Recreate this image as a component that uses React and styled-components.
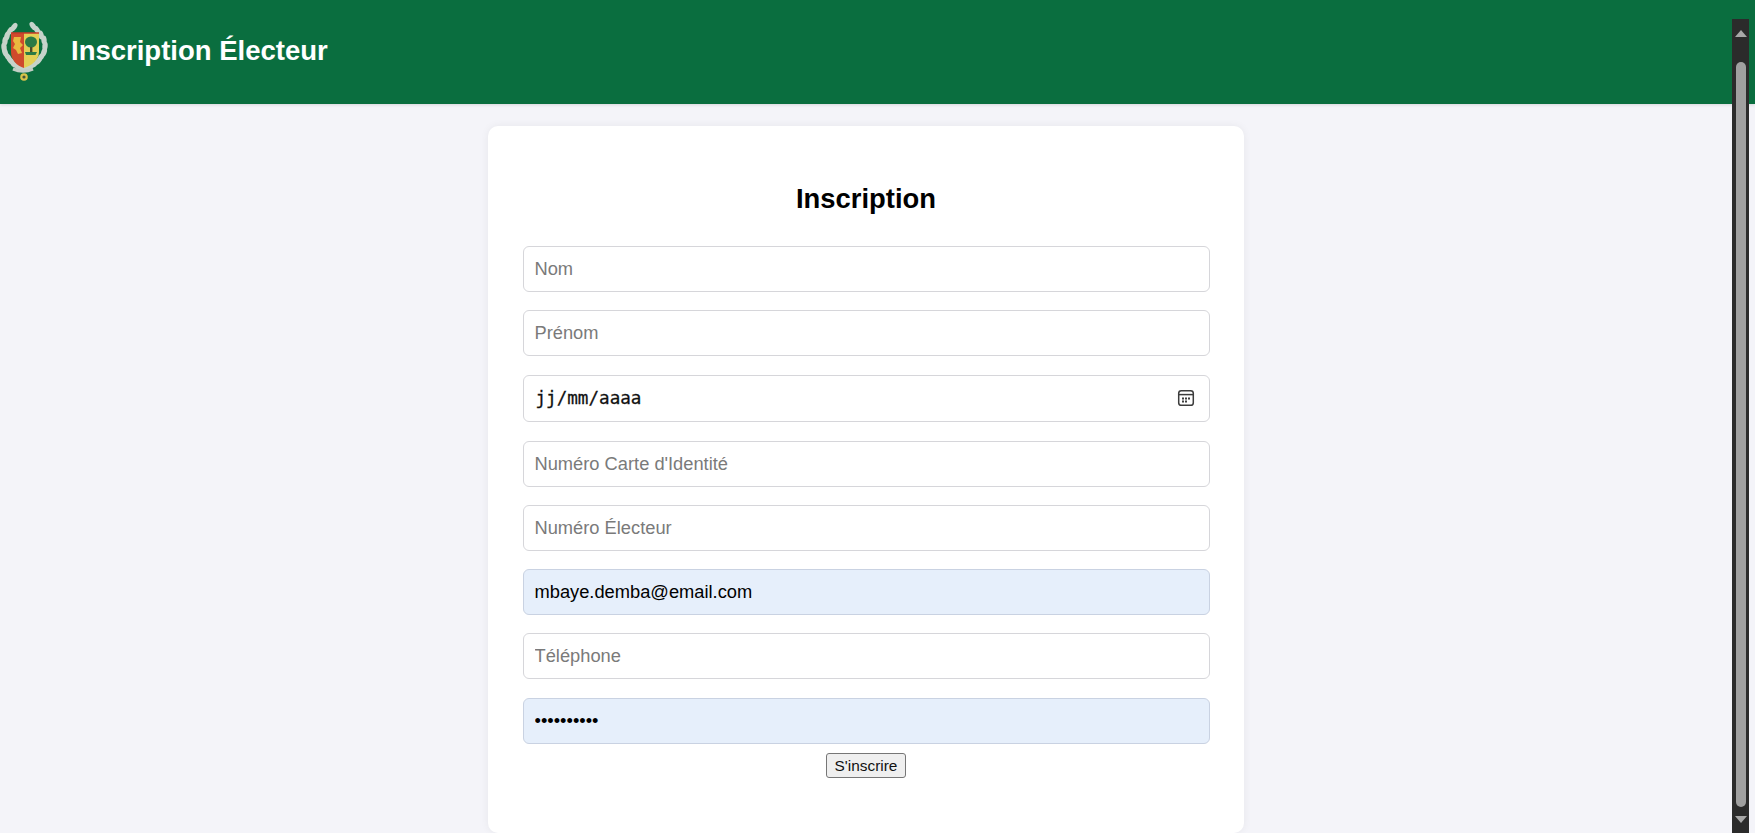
import React from "react";
import styled, { createGlobalStyle } from "styled-components";

const GlobalStyle = createGlobalStyle`
  html, body {
    margin: 0;
    height: 100%;
    overflow: hidden;
    background: #f4f4f9;
    font-family: "Liberation Sans", Arial, sans-serif;
  }
`;

const Page = styled.div`
  position: relative;
  height: 833px;
  overflow: hidden;
`;

const Header = styled.header`
  box-sizing: border-box;
  display: flex;
  align-items: center;
  gap: 21px;
  height: 104px;
  padding-bottom: 2px;
  background: #0a6e3f;
  box-shadow: 0 1px 3px rgba(0, 0, 0, 0.12);
`;

const Title = styled.h1`
  margin: 0;
  font-size: 27.5px;
  font-weight: 700;
  color: #ffffff;
`;

const Main = styled.main`
  display: flex;
  justify-content: center;
  padding: 22px 24px 0 0;
`;

const Card = styled.section`
  box-sizing: border-box;
  width: 756px;
  height: 707px;
  padding: 57px 34px 0 35px;
  background: #ffffff;
  border-radius: 10px;
  box-shadow: 0 0 8px rgba(0, 0, 0, 0.06);
`;

const CardTitle = styled.h2`
  margin: 0 0 31px;
  text-align: center;
  font-size: 27.4px;
  line-height: 32px;
  font-weight: 700;
  color: #000000;
`;

const Form = styled.form`
  display: flex;
  flex-direction: column;
  align-items: center;
`;

const Field = styled.input`
  box-sizing: border-box;
  width: 100%;
  height: 46px;
  margin-bottom: 18.3px;
  padding: 0 11px;
  border: 1px solid ${(p) => (p.$filled ? "#c9d2e2" : "#d6d6da")};
  border-radius: 6px;
  outline: none;
  background: ${(p) => (p.$filled ? "#e6effb" : "#ffffff")};
  font-family: "Liberation Sans", Arial, sans-serif;
  font-size: 18.3px;
  color: #000000;

  &::placeholder {
    color: #7a7a7a;
    opacity: 1;
  }
`;

const DateField = styled.div`
  box-sizing: border-box;
  display: flex;
  align-items: center;
  justify-content: space-between;
  width: 100%;
  height: 47px;
  margin-bottom: 19px;
  padding: 0 14px 0 12px;
  border: 1px solid #d6d6da;
  border-radius: 6px;
  background: #ffffff;
`;

const DateText = styled.span`
  font-family: "DejaVu Sans Mono", "Liberation Mono", monospace;
  font-size: 17.6px;
  letter-spacing: 0;
  -webkit-text-stroke: 0.3px #111;
  color: #111111;
`;

const SubmitButton = styled.button`
  box-sizing: border-box;
  width: 80px;
  height: 25px;
  margin-top: -9px;
  padding: 0;
  border: 1px solid #767676;
  border-radius: 3px;
  background: #efefef;
  font-family: "Liberation Sans", Arial, sans-serif;
  font-size: 15.4px;
  color: #111111;
`;

const Scrollbar = styled.div`
  position: absolute;
  top: 19px;
  bottom: 0;
  right: 6px;
  width: 17px;
  background: #2b2b2b;
`;

const ScrollArrow = styled.div`
  position: absolute;
  left: 3px;
  ${(p) => (p.$down ? "bottom: 10px;" : "top: 11px;")}
  width: 0;
  height: 0;
  border-left: 6px solid transparent;
  border-right: 6px solid transparent;
  ${(p) => (p.$down ? "border-top" : "border-bottom")}: 7px solid #a8a8a8;
`;

const ScrollThumb = styled.div`
  position: absolute;
  top: 43px;
  left: 4px;
  width: 10px;
  height: 745px;
  border-radius: 5px;
  background: #a0a0a0;
`;

const EmblemSvg = styled.svg`
  flex-shrink: 0;
  margin-top: 2px;
  filter: blur(0.45px);
`;

// leaf positions along each palm branch: x, y, angle
const leftLeaves = [
  [14, 27, 125], [10, 31, 120], [7, 36, 105], [5, 41, 95], [4, 47, 85],
  [5, 52, 70], [8, 57, 55], [11, 61, 45], [15, 65, 30], [20, 68, 15],
];
const rightLeaves = [
  [33, 26, 55], [37, 30, 60], [41, 35, 75], [44, 40, 85], [45, 46, 95],
  [44, 52, 110], [41, 57, 125], [38, 61, 135], [33, 65, 150], [28, 68, 165],
];

function Emblem() {
  return (
    <EmblemSvg width="50" height="62" viewBox="0 21 50 62">
      {/* palm branches */}
      {[...leftLeaves, ...rightLeaves].map(([x, y, a]) => (
        <ellipse
          key={`${x}-${y}`}
          cx={x}
          cy={y}
          rx="4.6"
          ry="2.7"
          fill="#c6d3ca"
          transform={`rotate(${a} ${x} ${y})`}
        />
      ))}
      <path d="M13 69c7 3 13 3 20 0" fill="none" stroke="#c2cec5" strokeWidth="3" />
      {/* shield */}
      <path d="M11 33h13v35c-7-2-13-8-13-16z" fill="#cf4a2c" />
      <path d="M24 33h15v19c0 8-8 14-15 16z" fill="#e4cf55" />
      <path d="M11 33h28" stroke="#c93a2a" strokeWidth="1.5" />
      {/* lion */}
      <path d="M14 37h7l-1 5 3 3-3 3 2 5-4 1-2-4-3-2 2-4-2-3z" fill="#e9b93f" />
      {/* baobab */}
      <ellipse cx="31" cy="42" rx="6" ry="5.5" fill="#2c7a45" />
      <path d="M30 47h2.4v6H30z" fill="#4d4a28" />
      <path d="M25 52h12l-1.5 3H26z" fill="#2c7a45" />
      {/* star medal */}
      <circle cx="24" cy="77" r="3.8" fill="#d8c34a" />
      <circle cx="24" cy="77" r="1.6" fill="#44563a" />
    </EmblemSvg>
  );
}

function CalendarIcon() {
  return (
    <svg width="18" height="18" viewBox="0 0 18 18" fill="none">
      <rect x="1.7" y="1.7" width="14.6" height="14.6" rx="2.6" stroke="#3c3c3c" strokeWidth="1.5" />
      <path d="M2 5.6h14" stroke="#3c3c3c" strokeWidth="1.5" />
      <path d="M5 8.5h2v2H5zM8 8.5h2v2H8zM11 8.5h2v2h-2zM5 11.5h2v2H5zM8 11.5h2v2H8z" fill="#3c3c3c" />
    </svg>
  );
}

export default function App() {
  return (
    <Page>
      <GlobalStyle />
      <Header>
        <Emblem />
        <Title>Inscription Électeur</Title>
      </Header>
      <Main>
        <Card>
          <CardTitle>Inscription</CardTitle>
          <Form onSubmit={(e) => e.preventDefault()}>
            <Field placeholder="Nom" />
            <Field placeholder="Prénom" />
            <DateField>
              <DateText>jj/mm/aaaa</DateText>
              <CalendarIcon />
            </DateField>
            <Field placeholder="Numéro Carte d'Identité" />
            <Field placeholder="Numéro Électeur" />
            <Field $filled type="email" defaultValue="mbaye.demba@email.com" />
            <Field placeholder="Téléphone" />
            <Field $filled type="password" defaultValue="motdepasse" />
            <SubmitButton type="submit">S'inscrire</SubmitButton>
          </Form>
        </Card>
      </Main>
      <Scrollbar>
        <ScrollArrow />
        <ScrollThumb />
        <ScrollArrow $down />
      </Scrollbar>
    </Page>
  );
}
